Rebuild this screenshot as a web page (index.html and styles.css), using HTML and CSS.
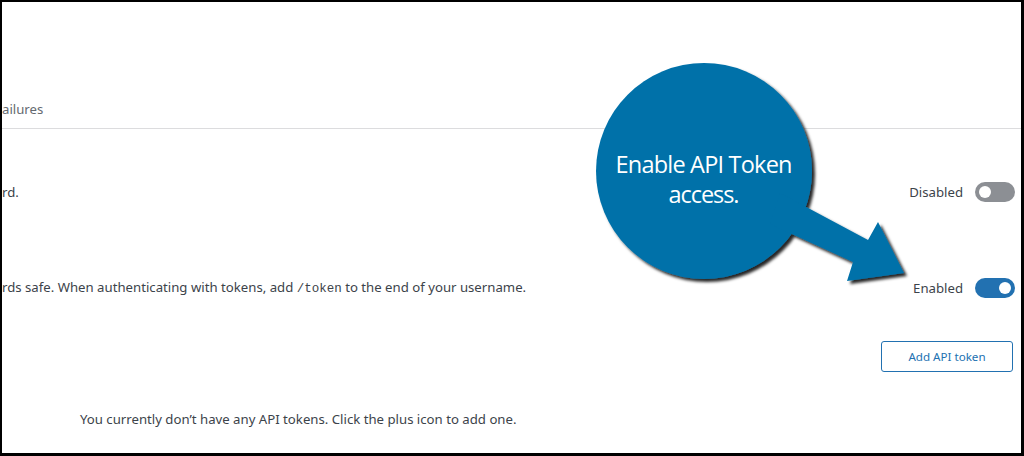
FILE: index.html
```html
<!DOCTYPE html>
<html>
<head>
    <meta charset="UTF-8">
    <title>API Tokens</title>
    <link rel="stylesheet" href="styles.css">
</head>
<body>
    <div class="frame">
        <div class="tabs">
            <span class="tab">ailures</span>
        </div>
        <div class="setting first">
            <p class="desc">rd.</p>
            <div class="control">
                <span class="state">Disabled</span>
                <span class="toggle"></span>
            </div>
        </div>
        <div class="setting second">
            <p class="desc">rds safe. When authenticating with tokens, add <code>/token</code> to the end of your username.</p>
            <div class="control">
                <span class="state">Enabled</span>
                <span class="toggle on"></span>
            </div>
        </div>
        <div class="actions">
            <button class="button" type="button">Add API token</button>
        </div>
        <p class="empty">You currently don’t have any API tokens. Click the plus icon to add one.</p>

        <!-- annotation bubble drawn over the page -->
        <svg class="callout" width="1024" height="456" viewBox="0 0 1024 456">
            <defs>
                <filter id="shade" x="-10%" y="-10%" width="130%" height="130%">
                    <feDropShadow dx="3" dy="3" stdDeviation="1.6" flood-color="#000" flood-opacity="0.85"/>
                </filter>
            </defs>
            <g filter="url(#shade)" fill="#0071a9">
                <circle cx="704" cy="171" r="108"/>
                <path d="M780 193 L868 240 L878 222 L904 273 L847 281 L853 262 L770 224 Z"/>
            </g>
            <text class="callout-text" x="704" y="173" textLength="177">Enable API Token</text>
            <text class="callout-text" x="704" y="203" textLength="71">access.</text>
        </svg>
    </div>
</body>
</html>
```

FILE: styles.css
```css
body {
    margin: 0;
    padding: 0;
    background-color: #fff;
    font-family: "Noto Sans", "Open Sans", sans-serif;
    font-size: 13.2px;
    color: #3c434a;
}
.frame {
    position: relative;
    height: 456px;
    box-sizing: border-box;
    border-style: solid;
    border-color: #000;
    border-width: 2px 3px 3px 2px;
    overflow: hidden;
}
.tabs {
    height: 127px;
    box-sizing: border-box;
    display: flex;
    align-items: flex-end;
    padding-bottom: 9px;
    border-bottom: 1px solid #dcdcde;
}
.tab {
    line-height: 20px;
    color: #646970;
}
.setting {
    display: flex;
    align-items: center;
    justify-content: space-between;
    padding-right: 6px;
}
.setting.first {
    margin-top: 53px;
}
.setting.second {
    margin-top: 75px;
}
.desc {
    margin: 0;
    line-height: 20px;
}
code {
    font-family: "Liberation Mono", monospace;
    font-size: 12.5px;
}
.control {
    display: flex;
    align-items: center;
    gap: 12px;
}
.state {
    line-height: 20px;
}
.toggle {
    position: relative;
    width: 40px;
    height: 20px;
    border-radius: 10px;
    background-color: #8c8f94;
}
.toggle::after {
    content: "";
    position: absolute;
    top: 4px;
    left: 4px;
    width: 12px;
    height: 12px;
    border-radius: 50%;
    background-color: #fff;
}
.toggle.on {
    background-color: #2271b1;
}
.toggle.on::after {
    left: 24px;
}
.actions {
    display: flex;
    justify-content: flex-end;
    padding-right: 8px;
    margin-top: 42px;
}
.button {
    width: 132px;
    height: 31px;
    border: 1px solid #2271b1;
    border-radius: 3px;
    background-color: #fff;
    color: #2271b1;
    font-family: inherit;
    font-size: 11.6px;
}
.empty {
    margin: 37px 0 0 78px;
    line-height: 20px;
}
.callout {
    position: absolute;
    top: -2px;
    left: -2px;
    pointer-events: none;
}
.callout-text {
    font-family: "Open Sans", sans-serif;
    font-size: 23.5px;
    fill: #fff;
    text-anchor: middle;
}
```
